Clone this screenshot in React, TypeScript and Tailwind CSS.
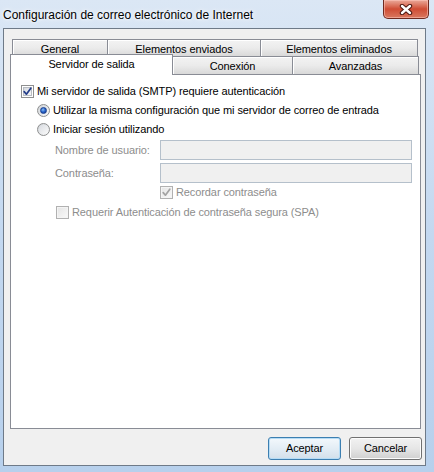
import React from "react";

function CheckMark({ color }: { color: string }) {
  return (
    <svg width="9" height="9" viewBox="0 0 9 9" className="absolute left-[1px] top-[1px]">
      <path d="M1.2 4.6 L3.4 7.2 L7.8 1.2" fill="none" stroke={color} strokeWidth="1.7" strokeLinecap="round" strokeLinejoin="round" />
    </svg>
  );
}

function Checkbox({ checked, disabled }: { checked?: boolean; disabled?: boolean }) {
  return (
    <span
      className={
        disabled
          ? "relative block w-[13px] h-[13px] shrink-0 border border-[#b1b1b1] bg-[#f4f4f4]"
          : "relative block w-[13px] h-[13px] shrink-0 border border-[#8e8f8f] bg-white"
      }
    >
      <span
        className={
          disabled
            ? "absolute left-[1px] top-[1px] w-[9px] h-[9px] bg-gradient-to-br from-[#e6e6e6] to-[#f7f7f7]"
            : "absolute left-[1px] top-[1px] w-[9px] h-[9px] border border-[#b8bcc2] bg-gradient-to-br from-[#d6dae0] to-[#f8f8f8]"
        }
      />
      {checked ? <CheckMark color={disabled ? "#a3a3a3" : "#243d8a"} /> : null}
    </span>
  );
}

function Radio({ checked }: { checked?: boolean }) {
  return (
    <span className="relative flex items-center justify-center w-[13px] h-[13px] shrink-0 rounded-full border border-[#8e8f8f] bg-gradient-to-br from-[#cfd3d8] to-[#fbfbfb]">
      {checked ? (
        <span className="block w-[7px] h-[7px] rounded-full bg-[radial-gradient(circle_at_40%_35%,#8fc0f0_0%,#2c6ad0_45%,#0e2f86_100%)] border border-[#1b3f8f]" />
      ) : (
        <span className="block w-[9px] h-[9px] rounded-full bg-gradient-to-br from-[#dadde2] to-[#f9f9f9]" />
      )}
    </span>
  );
}

function CloseButton() {
  return (
    <div className="w-[46px] h-[19px] rounded-b-[5px] border border-t-0 border-[#6f2a20] bg-gradient-to-b from-[#e9a99a] via-[#cf4c34] to-[#d9775f] shadow-[inset_0_0_0_1px_rgba(255,200,190,0.55)] flex items-center justify-center">
      <svg width="14" height="11" viewBox="0 0 14 11">
        <path d="M3 2 L11 9 M11 2 L3 9" stroke="#4b1710" strokeWidth="4.4" strokeLinecap="round" />
        <path d="M3 2 L11 9 M11 2 L3 9" stroke="#ffffff" strokeWidth="2.4" strokeLinecap="round" />
      </svg>
    </div>
  );
}

const tabBase =
  "flex items-center justify-center pt-[2px] border-t border-r border-[#898c95] bg-gradient-to-b from-[#f3f3f3] via-[#ebebeb] to-[#d9d9d9] shadow-[inset_1px_1px_0_#ffffff] text-black";

export default function App() {
  return (
    <div className="w-[434px] h-[472px] flex flex-col bg-gradient-to-b from-[#dbe7f5] via-[#c3d8f0] to-[#b7d0ec] font-['Segoe_UI','Liberation_Sans',sans-serif] text-[11px] leading-none tracking-[-0.1px] text-black overflow-hidden">
      {/* title bar */}
      <div className="h-[28px] flex items-start shrink-0">
        <div className="pl-[3px] pt-[9px] text-[12px] tracking-normal text-black [text-shadow:0_0_6px_#ffffff,0_0_3px_#ffffff]">
          Configuración de correo electrónico de Internet
        </div>
        <div className="ml-auto mr-[5px]">
          <CloseButton />
        </div>
      </div>

      {/* client area */}
      <div className="ml-[3px] mr-[8px] mb-[6px] h-[438px] border border-[#6e7a88] bg-[#f0f0f0] flex flex-col">
        {/* tab control */}
        <div className="ml-[6px] mt-[10px] w-[411px] flex flex-col">
          {/* back row */}
          <div className="flex pl-[2px] h-[17px]">
            <div className={`${tabBase} border-l w-[96px]`}>General</div>
            <div className={`${tabBase} w-[153px]`}>Elementos enviados</div>
            <div className={`${tabBase} w-[157px]`}>Elementos eliminados</div>
          </div>
          {/* front row */}
          <div className="flex items-end h-[18px]">
            <div className="relative z-10 w-[163px] h-[21px] -mb-[1px] bg-white border-t border-l border-r border-[#898c95] flex items-center justify-center pb-[1px]">
              Servidor de salida
            </div>
            <div className={`${tabBase} w-[120px] h-[18px]`}>Conexión</div>
            <div className={`${tabBase} w-[126px] h-[18px]`}>Avanzadas</div>
          </div>
          {/* panel */}
          <div className="h-[355px] border border-[#898c95] bg-white flex flex-col">
            <div className="flex items-center h-[13px] mt-[10px] ml-[10px]">
              <Checkbox checked />
              <span className="ml-[3px]">Mi servidor de salida (SMTP) requiere autenticación</span>
            </div>
            <div className="flex items-center h-[13px] mt-[6px] ml-[26px]">
              <Radio checked />
              <span className="ml-[3px]">Utilizar la misma configuración que mi servidor de correo de entrada</span>
            </div>
            <div className="flex items-center h-[13px] mt-[6px] ml-[26px]">
              <Radio />
              <span className="ml-[3px]">Iniciar sesión utilizando</span>
            </div>
            <div className="flex items-center h-[20px] mt-[4px]">
              <span className="ml-[44px] w-[105px] text-[#8d8d8d]">Nombre de usuario:</span>
              <div className="w-[252px] h-[20px] border border-[#b5c0cb] bg-[#f0f0f0]" />
            </div>
            <div className="flex items-center h-[20px] mt-[3px]">
              <span className="ml-[44px] w-[105px] text-[#8d8d8d]">Contraseña:</span>
              <div className="w-[252px] h-[20px] border border-[#b5c0cb] bg-[#f0f0f0]" />
            </div>
            <div className="flex items-center h-[13px] mt-[3px] ml-[149px]">
              <Checkbox checked disabled />
              <span className="ml-[3px] text-[#8d8d8d]">Recordar contraseña</span>
            </div>
            <div className="flex items-center h-[13px] mt-[7px] ml-[45px]">
              <Checkbox disabled />
              <span className="ml-[3px] text-[#8d8d8d]">Requerir Autenticación de contraseña segura (SPA)</span>
            </div>
          </div>
        </div>

        {/* buttons */}
        <div className="flex justify-end gap-[8px] mt-[8px] mr-[3px]">
          <button className="w-[73px] h-[23px] rounded-[3px] border border-[#3c7fb1] bg-gradient-to-b from-[#f3f8fc] via-[#e3edf5] to-[#d2dfea] shadow-[inset_0_0_0_1px_#b6dcf5] text-black text-[11px]">
            Aceptar
          </button>
          <button className="w-[73px] h-[23px] rounded-[3px] border border-[#707070] bg-gradient-to-b from-[#f2f2f2] via-[#e6e6e6] to-[#d0d0d0] shadow-[inset_0_0_0_1px_#fcfcfc] text-black text-[11px]">
            Cancelar
          </button>
        </div>
      </div>
    </div>
  );
}
